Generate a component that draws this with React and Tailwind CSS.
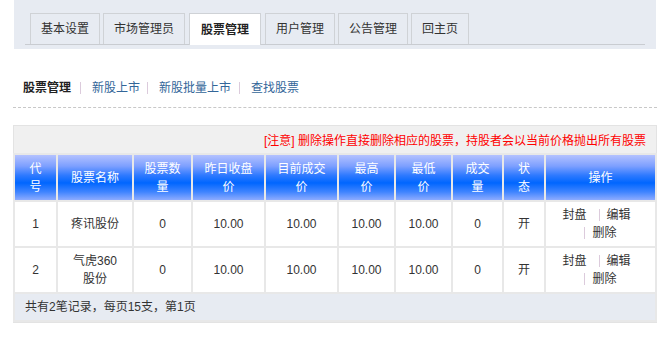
import React from 'react';

const tabs = ['基本设置', '市场管理员', '股票管理', '用户管理', '公告管理', '回主页'];

const columns = [
  { w: 'w-[41px]', label: ['代', '号'] },
  { w: 'w-[74px]', label: ['股票名称'] },
  { w: 'w-[57px]', label: ['股票数', '量'] },
  { w: 'w-[71px]', label: ['昨日收盘', '价'] },
  { w: 'w-[71px]', label: ['目前成交', '价'] },
  { w: 'w-[55px]', label: ['最高', '价'] },
  { w: 'w-[55px]', label: ['最低', '价'] },
  { w: 'w-[49px]', label: ['成交', '量'] },
  { w: 'w-[40px]', label: ['状', '态'] },
  { w: 'w-[109px]', label: ['操作'] },
];

const stocks = [
  { id: 1, name: ['疼讯股份'], amount: 0, close: '10.00', current: '10.00', high: '10.00', low: '10.00', volume: 0, status: '开' },
  { id: 2, name: ['气虎360', '股份'], amount: 0, close: '10.00', current: '10.00', high: '10.00', low: '10.00', volume: 0, status: '开' },
];

// small vertical divider used in the nav and the action cell
const Sep = ({ className = '' }) => (
  <span className={`inline-block w-px h-[12px] bg-[#dccbdc] ${className}`} />
);

const App = () => {
  return (
    <div className="w-[657px] h-[337px] bg-white text-[12px] text-[#333] font-['Liberation_Sans','Noto_Sans_CJK_SC',sans-serif] overflow-hidden">
      {/* Tabs */}
      <div className="ml-[14px] w-[642px] h-[49px] bg-[#e7ebf2] pt-[13px]">
        <div className="mx-[11px] flex gap-[3px] pl-[5px] border-b border-[#c9ccd1] h-[32px]">
          {tabs.map((tab) => {
            const active = tab === '股票管理';
            return (
              <div
                key={tab}
                className={
                  active
                    ? 'h-[32px] px-[11px] flex items-center border border-b-0 border-[#cfd2d6] bg-white font-bold text-[#222] mx-[1px]'
                    : 'h-[31px] px-[10px] flex items-center border border-b-0 border-[#cfd2d6] bg-[#e7ebf2]'
                }
              >
                {tab}
              </div>
            );
          })}
        </div>
      </div>

      {/* Sub nav */}
      <div className="mt-[29px] ml-[23px] h-[20px] flex items-center">
        <span className="font-bold text-[#222]">股票管理</span>
        <Sep className="ml-[9px] mr-[11px]" />
        <span className="text-[#336699]">新股上市</span>
        <Sep className="ml-[7px] mr-[11px]" />
        <span className="text-[#336699]">新股批量上市</span>
        <Sep className="ml-[8px] mr-[11px]" />
        <span className="text-[#336699]">查找股票</span>
      </div>
      <div className="mt-[9px] ml-[13px] w-[644px] border-t border-dashed border-[#c8c8c8]" />

      {/* Stock table */}
      <div className="mt-[17px] ml-[13px] w-[644px] border border-[#e3e3e3] bg-[#f0f0f0]">
        <div className="h-[29px] flex items-center justify-end pr-[10px] text-[#ff0000]">
          [注意] 删除操作直接删除相应的股票，持股者会以当前价格抛出所有股票
        </div>
        <table className="table-fixed border-separate border-spacing-[2px] -mx-px mt-[-2px] w-[644px] bg-[#e8e8e8]">
          <thead>
            <tr className="h-[45px]">
              {columns.map((col, i) => (
                <th
                  key={i}
                  className={`${col.w} p-0 font-normal text-white leading-[18px] text-center bg-[linear-gradient(to_bottom,#b4c2ff_0%,#7c9fff_25%,#2f7aff_45%,#0066ff_62%,#3f84ff_82%,#8eacff_100%)]`}
                >
                  {col.label.map((l, j) => (
                    <div key={j}>{l}</div>
                  ))}
                </th>
              ))}
            </tr>
          </thead>
          <tbody>
            {stocks.map((s) => (
              <tr key={s.id} className="h-[44px] bg-white text-center">
                <td className="p-0">{s.id}</td>
                <td className="p-0 leading-[18px]">
                  {s.name.map((n, j) => (
                    <div key={j}>{n}</div>
                  ))}
                </td>
                <td className="p-0">{s.amount}</td>
                <td className="p-0">{s.close}</td>
                <td className="p-0">{s.current}</td>
                <td className="p-0">{s.high}</td>
                <td className="p-0">{s.low}</td>
                <td className="p-0">{s.volume}</td>
                <td className="p-0">{s.status}</td>
                <td className="p-0 leading-[18px]">
                  <div className="flex items-center justify-center pr-[8px]">
                    <span>封盘</span>
                    <Sep className="ml-[12px] mr-[7px]" />
                    <span>编辑</span>
                  </div>
                  <div className="flex items-center justify-center">
                    <Sep className="mr-[7px]" />
                    <span>删除</span>
                  </div>
                </td>
              </tr>
            ))}
            <tr className="h-[26px]">
              <td colSpan={10} className="p-0 pl-[10px] bg-[#e7ebf2] text-left">
                共有2笔记录，每页15支，第1页
              </td>
            </tr>
          </tbody>
        </table>
      </div>
    </div>
  );
};

export default App;
